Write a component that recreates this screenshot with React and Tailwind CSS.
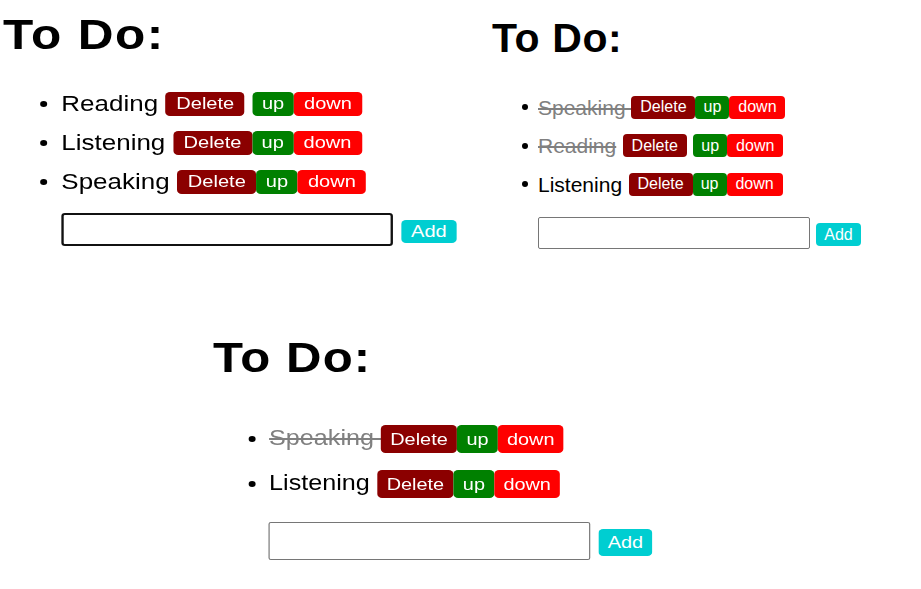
const panels = [
  {
    wrap: "w-[490px] pt-[13.5px]",
    inner: "origin-top-left scale-x-[1.18]",
    heading: "pl-[2.5px] text-[42px] h-[42px] tracking-[1.2px]",
    list: "mt-[28.5px]",
    row: "h-[39px] pl-[34px] text-[22px]",
    bullet: "mr-[12px]",
    del: "w-[67px] h-[24px] text-[17px]",
    up: "w-[35px] h-[24px] text-[17px]",
    down: "w-[58px] h-[24px] text-[17px]",
    form: "mt-[12px] pl-[52px]",
    input: "w-[281px] h-[33px] border-2 border-[#111] rounded-[3px]",
    add: "ml-[7px] mt-[7px] w-[47px] h-[23px] text-[17px]",
    items: [
      { text: "Reading", gapText: true, gapDel: true },
      { text: "Listening", gapText: true },
      { text: "Speaking", gapText: true },
    ],
  },
  {
    wrap: "flex-1 pt-[18px]",
    inner: "",
    heading: "pl-[2px] text-[41px] h-[41px] tracking-[0.6px]",
    list: "mt-[29px]",
    row: "h-[38.5px] pl-[32px] text-[21px]",
    bullet: "mr-[10px]",
    del: "w-[64px] h-[23px] text-[16px]",
    up: "w-[34px] h-[23px] text-[16px]",
    down: "w-[56px] h-[23px] text-[16px]",
    form: "mt-[13.5px] pl-[48px]",
    input: "w-[272px] h-[32px] border border-[#767676] rounded-[2px]",
    add: "ml-[6px] mt-[6px] w-[45px] h-[23px] text-[16px]",
    items: [
      { text: "Speaking", done: true, strikeSpace: true },
      { text: "Reading", done: true, gapText: true, gapDel: true },
      { text: "Listening", gapText: true },
    ],
  },
];

const bottom = {
  wrap: "pl-[210px] pt-[16.5px]",
  inner: "origin-top-left scale-x-[1.17]",
  heading: "pl-[2.5px] text-[42px] h-[42px] tracking-[0.9px]",
  list: "mt-[38px]",
  row: "h-[45px] pl-[33px] text-[21.5px]",
  bullet: "mr-[11.5px]",
  del: "w-[65px] h-[28px] text-[17px]",
  up: "w-[35px] h-[28px] text-[17px]",
  down: "w-[56px] h-[28px] text-[17px]",
  form: "mt-[15.5px] pl-[50px]",
  input: "w-[275px] h-[38px] border border-[#767676] rounded-[2px]",
  add: "ml-[7px] mt-[7px] w-[46px] h-[27px] text-[17px]",
  items: [
    { text: "Speaking", done: true, strikeSpace: true },
    { text: "Listening", gapText: true },
  ],
};

const btn = "flex items-center justify-center rounded-[4px] text-white leading-none shrink-0";

function TodoPanel({ p }) {
  return (
    <div className={p.wrap}>
      <div className={p.inner}>
        <h1 className={`${p.heading} font-bold leading-none text-black`}>To Do:</h1>
        <ul className={p.list}>
          {p.items.map((it) => (
            <li key={it.text} className={`${p.row} flex items-center`}>
              <span className={`${p.bullet} w-[6px] h-[6px] rounded-full bg-black shrink-0`}></span>
              <span
                className={`leading-none whitespace-pre ${
                  it.done ? "text-[#808080] line-through" : "text-black"
                }`}
              >
                {it.strikeSpace ? it.text + "\u00a0" : it.text}
              </span>
              <button className={`${btn} ${p.del} bg-[#8b0000] ${it.gapText ? "ml-[6.5px]" : ""}`}>
                Delete
              </button>
              <button className={`${btn} ${p.up} bg-[#008000] ${it.gapDel ? "ml-[6.5px]" : ""}`}>
                up
              </button>
              <button className={`${btn} ${p.down} bg-[#ff0000]`}>down</button>
            </li>
          ))}
        </ul>
        <div className={`${p.form} flex items-start`}>
          <input className={`${p.input} bg-white outline-none`} />
          <button className={`${btn} ${p.add} bg-[#00ced1]`}>Add</button>
        </div>
      </div>
    </div>
  );
}

export default function App() {
  return (
    <div className="w-[921px] h-[589px] overflow-hidden bg-white font-['Liberation_Sans',Arial,sans-serif]">
      <div className="flex h-[320px]">
        {panels.map((p, i) => (
          <TodoPanel key={i} p={p} />
        ))}
      </div>
      <TodoPanel p={bottom} />
    </div>
  );
}
